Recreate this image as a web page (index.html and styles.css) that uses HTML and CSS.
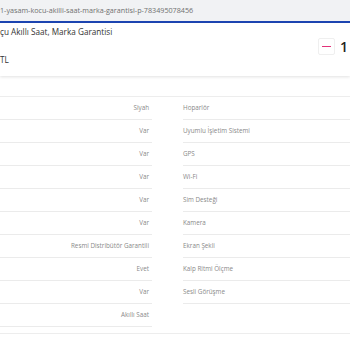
FILE: index.html
```html
<!DOCTYPE html>
<html lang="tr">
<head>
<meta charset="utf-8">
<link rel="stylesheet" href="styles.css">
</head>
<body>
<div class="urlbar">1-yasam-kocu-akilli-saat-marka-garantisi-p-783495078456</div>
<div class="blueline"></div>
<header class="header">
  <div class="info">
    <div class="title">çu Akıllı Saat, Marka Garantisi</div>
    <div class="price">TL</div>
  </div>
  <div class="qty">
    <span class="minus"><span class="bar"></span></span>
    <span class="count">1</span>
  </div>
</header>
<section class="specs">
  <div class="col left">
    <div class="row">Siyah</div>
    <div class="row">Var</div>
    <div class="row">Var</div>
    <div class="row">Var</div>
    <div class="row">Var</div>
    <div class="row">Var</div>
    <div class="row">Resmi Distribütör Garantili</div>
    <div class="row">Evet</div>
    <div class="row">Var</div>
    <div class="row">Akıllı Saat</div>
  </div>
  <div class="col right">
    <div class="row">Hoparlör</div>
    <div class="row">Uyumlu İşletim Sistemi</div>
    <div class="row">GPS</div>
    <div class="row">Wi-Fi</div>
    <div class="row">Sim Desteği</div>
    <div class="row">Kamera</div>
    <div class="row">Ekran Şekli</div>
    <div class="row">Kalp Ritmi Ölçme</div>
    <div class="row">Sesli Görüşme</div>
  </div>
</section>
</body>
</html>
```
FILE: styles.css
```css
html, body {
  margin: 0;
  padding: 0;
  background: #fff;
  font-family: "Open Sans", "Noto Sans", sans-serif;
}
.urlbar {
  height: 21px;
  background: #f1f2f4;
  color: #707070;
  font-size: 7.2px;
  line-height: 21px;
  white-space: nowrap;
  overflow: hidden;
}
.blueline {
  height: 2px;
  background: #1d46b3;
}
.header {
  height: 53px;
  display: flex;
  justify-content: space-between;
  align-items: center;
  box-shadow: 0 1px 3px rgba(0,0,0,0.12);
  position: relative;
}
.info {
  display: flex;
  flex-direction: column;
  gap: 17px;
  color: #333;
  font-size: 8.2px;
  line-height: 11px;
  margin-top: -8px;
}
.qty {
  display: flex;
  align-items: center;
  gap: 5px;
  margin-right: 2px;
  margin-top: -6px;
}
.minus {
  width: 15px;
  height: 15px;
  border: 1px solid #efefef;
  border-radius: 2px;
  display: flex;
  align-items: center;
  justify-content: center;
}
.minus .bar {
  width: 9px;
  height: 1.6px;
  background: #e2327a;
}
.count {
  font-size: 14px;
  color: #222;
  font-weight: 600;
}
.specs {
  margin-top: 20px;
  border-top: 1px solid #ededed;
  border-bottom: 1px solid #ededed;
  display: grid;
  grid-template-columns: 152px 1fr;
  column-gap: 31px;
  padding-bottom: 6px;
  align-items: start;
}
.row {
  height: 22px;
  border-bottom: 1px solid #ebebeb;
  font-size: 6.3px;
  line-height: 22px;
  color: #8a8a8a;
  white-space: nowrap;
}
.left .row {
  text-align: right;
  padding-right: 3px;
}
```
